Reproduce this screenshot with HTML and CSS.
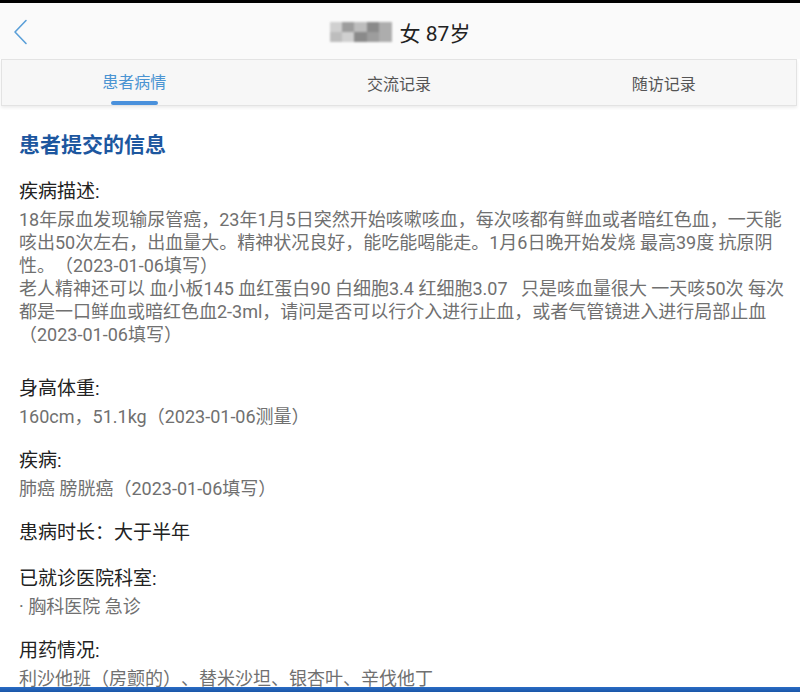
FILE: index.html
```html
<!DOCTYPE html>
<html lang="zh-CN">
<head>
    <meta charset="UTF-8">
    <meta name="viewport" content="width=device-width, initial-scale=1.0">
    <title>患者病情</title>
    <link rel="stylesheet" href="styles.css">
</head>
<body>
    <div class="status-strip"></div>

    <!-- Header -->
    <div class="header">
        <div class="back-btn">
            <svg width="16" height="26" viewBox="0 0 16 26">
                <path d="M13 1.5 L2 13 L13 24.5" fill="none" stroke="#5a9fd8" stroke-width="1.6" stroke-linecap="round" stroke-linejoin="round"/>
            </svg>
        </div>
        <div class="header-title">
            <span class="name-blur">
                <i class="c1"></i><i class="c2"></i><i class="c3"></i><i class="c4"></i><i class="c5"></i>
                <i class="c3"></i><i class="c1"></i><i class="c4"></i><i class="c2"></i><i class="c5"></i>
            </span>
            <span>女 87岁</span>
        </div>
        <div></div>
    </div>

    <!-- Tabs -->
    <div class="tabs">
        <div class="tab active">
            <span class="tab-label">患者病情</span>
            <span class="tab-line"></span>
        </div>
        <div class="tab">
            <span class="tab-label">交流记录</span>
        </div>
        <div class="tab">
            <span class="tab-label">随访记录</span>
        </div>
    </div>

    <!-- Content -->
    <div class="content">
        <h2 class="section-title">患者提交的信息</h2>

        <div class="info-block first">
            <div class="info-label">疾病描述:</div>
            <div class="info-value">
                18年尿血发现输尿管癌，23年1月5日突然开始咳嗽咳血，每次咳都有鲜血或者暗红色血，一天能<br>
                咳出50次左右，出血量大。精神状况良好，能吃能喝能走。1月6日晚开始发烧 最高39度 抗原阴<br>
                性。（2023-01-06填写）<br>
                老人精神还可以 血小板145 血红蛋白90 白细胞3.4 红细胞3.07&nbsp;&nbsp;&nbsp;只是咳血量很大 一天咳50次 每次<br>
                都是一口鲜血或暗红色血2-3ml，请问是否可以行介入进行止血，或者气管镜进入进行局部止血<br>
                （2023-01-06填写）
            </div>
        </div>

        <div class="info-block wide">
            <div class="info-label">身高体重:</div>
            <div class="info-value">160cm，51.1kg（2023-01-06测量）</div>
        </div>

        <div class="info-block">
            <div class="info-label">疾病:</div>
            <div class="info-value">肺癌 膀胱癌（2023-01-06填写）</div>
        </div>

        <div class="info-block">
            <div class="info-label">患病时长：大于半年</div>
        </div>

        <div class="info-block tight">
            <div class="info-label">已就诊医院科室:</div>
            <div class="info-value">· 胸科医院 急诊</div>
        </div>

        <div class="info-block">
            <div class="info-label">用药情况:</div>
            <div class="info-value">利沙他班（房颤的）、替米沙坦、银杏叶、辛伐他丁</div>
        </div>
    </div>

    <div class="bottom-bar"></div>
</body>
</html>
```

FILE: styles.css
```css
/* Base */
body {
    margin: 0;
    padding: 0;
    background: #ffffff;
    font-family: Roboto, "Noto Sans CJK SC", sans-serif;
    color: #222;
    overflow: hidden;
    text-spacing-trim: space-all;
}

.status-strip {
    height: 3px;
    background: #000;
}

/* Header */
.header {
    height: 56px;
    background: #fafafa;
    display: grid;
    grid-template-columns: 1fr auto 1fr;
    align-items: center;
}

.back-btn {
    padding-left: 13px;
    display: flex;
    align-items: center;
    padding-top: 1px;
}

.header-title {
    display: flex;
    align-items: center;
    gap: 8px;
    font-size: 21px;
    color: #222;
    padding-top: 2px;
}

.name-blur {
    display: grid;
    grid-template-columns: repeat(5, 1fr);
    width: 62px;
    height: 20px;
    filter: blur(1.2px);
    opacity: 0.85;
}

.name-blur i {
    display: block;
}

.name-blur .c1 { background: #c9c9c9; }
.name-blur .c2 { background: #8d8d8d; }
.name-blur .c3 { background: #b3b3b3; }
.name-blur .c4 { background: #777; }
.name-blur .c5 { background: #a0a0a0; }

/* Tabs */
.tabs {
    margin: 0 3px 0 1px;
    height: 45px;
    background: #f7f7f7;
    border: 1px solid #e3e3e3;
    box-shadow: 0 2px 3px rgba(0, 0, 0, 0.07);
    display: grid;
    grid-template-columns: 1fr 1fr 1fr;
}

.tab {
    display: flex;
    flex-direction: column;
    align-items: center;
}

.tab-label {
    flex: 1;
    display: flex;
    align-items: center;
    font-size: 16px;
    color: #555;
    padding-top: 1px;
}

.tab.active .tab-label {
    color: #4b94d2;
}

.tab-line {
    width: 47px;
    height: 4px;
    border-radius: 2px;
    background: #4a91dc;
    margin-bottom: 0;
}

/* Content */
.content {
    padding: 0 8px 0 19px;
}

.section-title {
    margin: 24px 0 0;
    font-size: 21px;
    line-height: 30px;
    font-weight: bold;
    color: #1d579f;
}

.info-block {
    margin-top: 19px;
}

.info-block.first {
    margin-top: 18px;
}

.info-block.wide {
    margin-top: 29px;
}

.info-block.tight {
    margin-top: 18px;
}

.info-label {
    font-size: 19px;
    line-height: 28px;
    color: #222;
}

.info-value {
    margin-top: 2px;
    font-size: 18px;
    line-height: 23px;
    color: #707070;
    white-space: nowrap;
}

/* Bottom strip */
.bottom-bar {
    position: fixed;
    left: 0;
    right: 0;
    bottom: 0;
    height: 5px;
    background: linear-gradient(180deg, #2a6cc4, #1a56a8);
}
```
